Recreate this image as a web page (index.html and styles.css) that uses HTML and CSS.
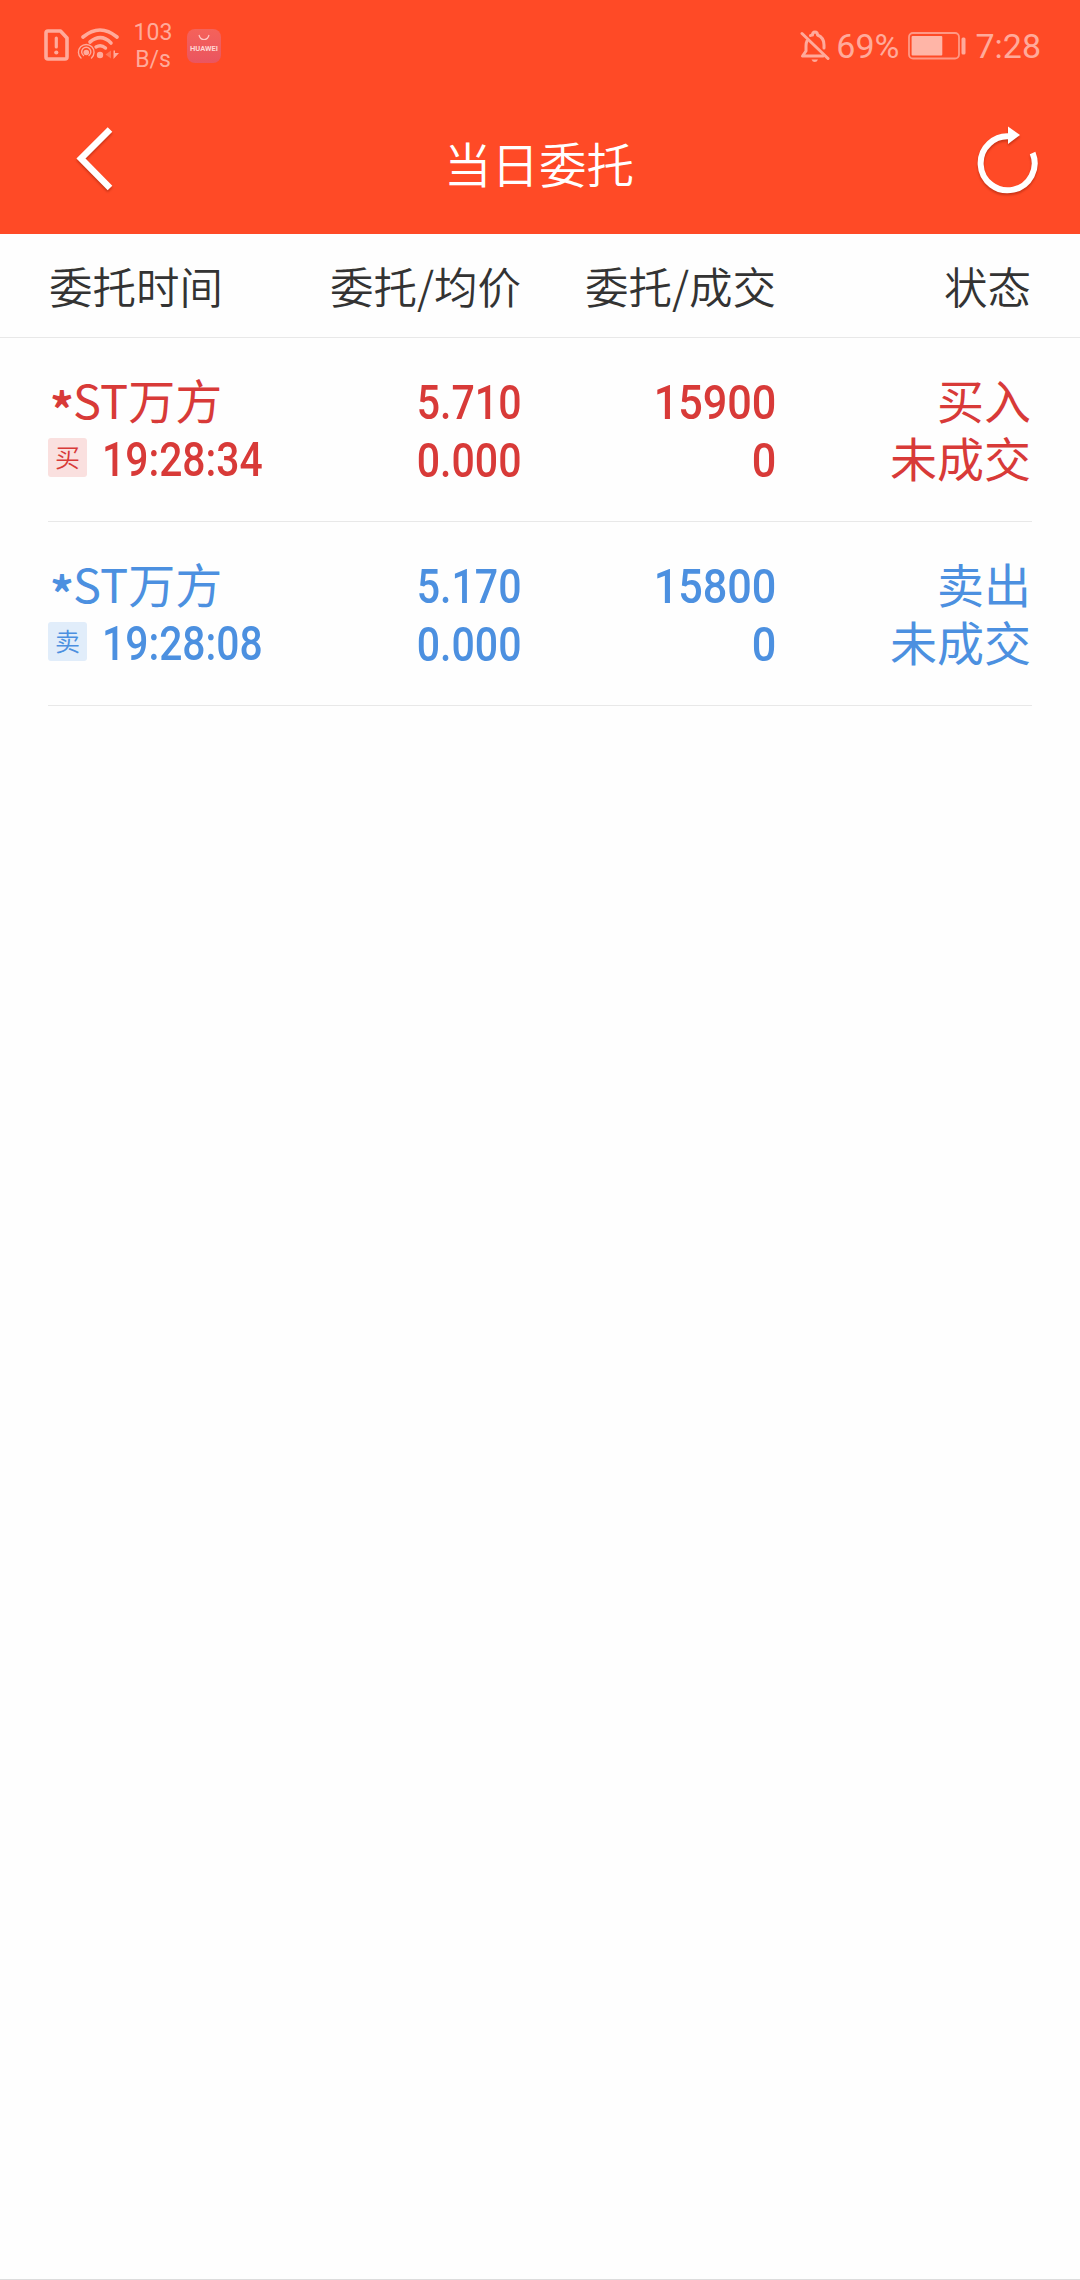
FILE: index.html
```html
<!DOCTYPE html>
<html lang="zh-CN">
<head>
	<meta charset="UTF-8">
	<meta name="viewport" content="width=device-width,initial-scale=1.0">
	<title>当日委托</title>
	<link rel="stylesheet" href="styles.css">
</head>
<body>

	<header class="header">
		<div class="status_bar">
			<svg class="icon_sim" width="25" height="32" viewBox="0 0 25 32">
				<path d="M4 2H16.5L23 9V28Q23 30 21 30H4Q2 30 2 28V4Q2 2 4 2Z" fill="none" stroke="#ffaa9b" stroke-width="3.6" stroke-linejoin="round"/>
				<path d="M12.300 9V18" stroke="#ffaa9b" stroke-width="3.200" stroke-linecap="round"/>
				<circle cx="12.300" cy="23.500" r="2.100" fill="#ffaa9b"/>
			</svg>
			<svg class="icon_wifi" width="43" height="34" viewBox="0 0 43 34">
				<g fill="none" stroke="#ffaa9b" stroke-linecap="round">
					<path d="M6 9Q23 -5 40 9" stroke-width="3.600"/>
					<path d="M13 14Q24 5 34 15" stroke-width="3.600"/>
					<path d="M19 19Q24 16 28.500 20" stroke-width="3.400"/>
					<path d="M4 30A7.800 7.800 0 1 1 14.500 30" stroke-width="1.400"/>
					<path d="M6.500 27.500A4.600 4.600 0 1 1 12 27.500" stroke-width="1.400"/>
				</g>
				<circle cx="9.300" cy="24.500" r="2.800" fill="#ffaa9b"/>
				<circle cx="23" cy="27" r="3.200" fill="#ffaa9b"/>
				<path d="M28.500 26.500L34 22.500V30.500Z" fill="#ff7659"/>
				<path d="M36.500 22.500H38V25H42L36.500 31Z" fill="#ffaa9b"/>
			</svg>
			<div class="speed">103<br>B/s</div>
			<div class="app_badge">
				<svg width="14" height="8" viewBox="0 0 14 8"><path d="M2 1Q3 5.500 7 5.500T12 1" fill="none" stroke="#ffc5c2" stroke-width="1.200"/></svg>
				<span>HUAWEI</span>
			</div>
			<div class="status_right">
				<svg class="icon_bell" width="30" height="33" viewBox="0 0 30 33">
					<g fill="none" stroke="#ffaa9b" stroke-width="3" stroke-linecap="round" stroke-linejoin="round">
						<path d="M2 3.500L28 28.500"/>
						<path d="M7 11Q6 13 6 16V21L2.500 26H23"/>
						<path d="M10.500 5.500Q11.500 5 12.500 5Q12.500 2 15 2T17.500 5Q24 7.500 24 15V18"/>
					</g>
					<path d="M11.500 29.500H18Q17 32 14.750 32T11.500 29.500Z" fill="#ffaa9b"/>
				</svg>
				<span class="percent">69%</span>
				<svg class="icon_battery" width="58" height="28" viewBox="0 0 58 28">
					<rect x="1" y="1" width="50" height="25.500" rx="4" fill="none" stroke="#ff9885" stroke-width="1.800"/>
					<rect x="3.600" y="4" width="30.700" height="19.500" rx="1" fill="#ffb5a7"/>
					<rect x="53.500" y="5.500" width="4" height="17" rx="1.500" fill="#ffaa9b"/>
				</svg>
				<span class="clock">7:28</span>
			</div>
		</div>
		<div class="nav_bar">
			<svg class="icon_back" width="40" height="66" viewBox="0 0 40 66">
				<path d="M35 4.500L6 33.500L35 63" fill="none" stroke="#fff" stroke-width="6.500"/>
			</svg>
			<h1 class="title">当日委托</h1>
			<svg class="icon_refresh" width="66" height="70" viewBox="0 0 66 70">
				<path d="M57.600 28A27 27 0 1 1 36 11.500" fill="none" stroke="#fff" stroke-width="6"/>
				<path d="M33 1.500L45 10L33 19Z" fill="#fff"/>
			</svg>
		</div>
	</header>

	<div class="table_head">
		<span>委托时间</span>
		<span>委托/均价</span>
		<span>委托/成交</span>
		<span>状态</span>
	</div>

	<ul class="order_list">
		<li class="order buy">
			<div class="cell">
				<p class="name"><span class="star">*</span>ST万方</p>
				<p class="time"><i class="tag">买</i><span class="num">19:28:34</span></p>
			</div>
			<div class="cell price">
				<p><span class="num">5.710</span></p>
				<p><span class="num">0.000</span></p>
			</div>
			<div class="cell amount">
				<p><span class="num">15900</span></p>
				<p><span class="num">0</span></p>
			</div>
			<div class="cell state">
				<p>买入</p>
				<p>未成交</p>
			</div>
		</li>
		<li class="order sell">
			<div class="cell">
				<p class="name"><span class="star">*</span>ST万方</p>
				<p class="time"><i class="tag">卖</i><span class="num">19:28:08</span></p>
			</div>
			<div class="cell price">
				<p><span class="num">5.170</span></p>
				<p><span class="num">0.000</span></p>
			</div>
			<div class="cell amount">
				<p><span class="num">15800</span></p>
				<p><span class="num">0</span></p>
			</div>
			<div class="cell state">
				<p>卖出</p>
				<p>未成交</p>
			</div>
		</li>
	</ul>

</body>
</html>
```

FILE: styles.css
```css
*{
	box-sizing: border-box;
	margin: 0;
	padding: 0;
}
body{
	height: 2280px;
	background: #fefefe;
	border-bottom: 1px solid #dcdcdc;
	font-family: "Noto Sans CJK SC", sans-serif;
	color: #333;
}
svg{
	display: block;
	flex: none;
}

/* 顶部 */
.header{
	height: 234px;
	background: #ff4a26;
}
.status_bar{
	display: flex;
	height: 91px;
	padding: 0 39px 0 44px;
	font-family: Roboto, sans-serif;
	color: #ffaa9b;
}
.icon_sim{
	margin-top: 29px;
}
.icon_wifi{
	margin: 28px 0 0 8px;
}
.speed{
	width: 40px;
	margin: 19px 0 0 13px;
	font-size: 23px;
	line-height: 27px;
	text-align: center;
}
.app_badge{
	display: flex;
	flex-direction: column;
	align-items: center;
	width: 34px;
	height: 34px;
	margin: 29px 0 0 14px;
	padding-top: 5px;
	border-radius: 8px;
	background: linear-gradient(#f5625a, #ea5560);
}
.app_badge span{
	font-size: 7.500px;
	font-weight: 700;
	line-height: 13px;
	color: #ffd5d2;
}
.status_right{
	display: flex;
	margin-left: auto;
	font-size: 34px;
	line-height: 40px;
}
.icon_bell{
	margin-top: 30px;
}
.percent{
	margin: 26px 0 0 6px;
}
.icon_battery{
	margin: 32px 0 0 9px;
}
.clock{
	margin: 26px 0 0 9px;
}

.nav_bar{
	display: flex;
	justify-content: space-between;
	padding: 34px 39px 0 75px;
}
.icon_back, .icon_refresh{
	filter: drop-shadow(0 2px 1px rgba(120, 20, 0, .4));
}
.title{
	margin-left: -12px;
	font-size: 47.500px;
	font-weight: 350;
	line-height: 75px;
	color: #fff;
}

/* 列表 */
.table_head, .order{
	display: grid;
	grid-template-columns: 254px 218px 255px 255px;
}
.table_head{
	height: 104px;
	padding: 0 49px;
	border-bottom: 1px solid #e8e8e8;
	font-size: 43.500px;
	font-weight: 350;
	line-height: 104px;
}
.table_head span, .cell{
	text-align: right;
}
.table_head span:first-child, .cell:first-child{
	text-align: left;
}
.order_list{
	margin: 0 48px;
	list-style: none;
}
.order{
	height: 184px;
	padding: 32px 0 0 1px;
	border-bottom: 1px solid #e8e8e8;
	font-size: 47px;
	line-height: 57.500px;
}
.cell p{
	height: 57.500px;
	white-space: nowrap;
}
.num{
	display: inline-block;
	font-family: Roboto, sans-serif;
	font-size: 48px;
	font-weight: 500;
	transform: scaleX(.9);
	transform-origin: right;
}
.price .num{
	transform: scaleX(.855);
}
.state{
	padding-top: 4px;
	font-family: "Liberation Sans", "Noto Sans CJK SC", sans-serif;
}
.buy{
	color: #d83a38;
}
.sell{
	color: #4c90e0;
}
.time{
	display: flex;
}
.time .num{
	margin-top: 3px;
	transform: scaleX(.85);
	transform-origin: left;
}
.star{
	display: inline-block;
	width: 24px;
	padding-left: 1px;
	font-weight: 700;
	line-height: 0;
	vertical-align: -9px;
}
.tag{
	width: 39px;
	height: 39px;
	margin: 10px 15px 0 -1px;
	border-radius: 3px;
	font-size: 25px;
	font-style: normal;
	font-weight: 350;
	line-height: 37px;
	text-align: center;
}
.buy .tag{
	background: #fae0df;
}
.sell .tag{
	background: #e1edfa;
}
```
